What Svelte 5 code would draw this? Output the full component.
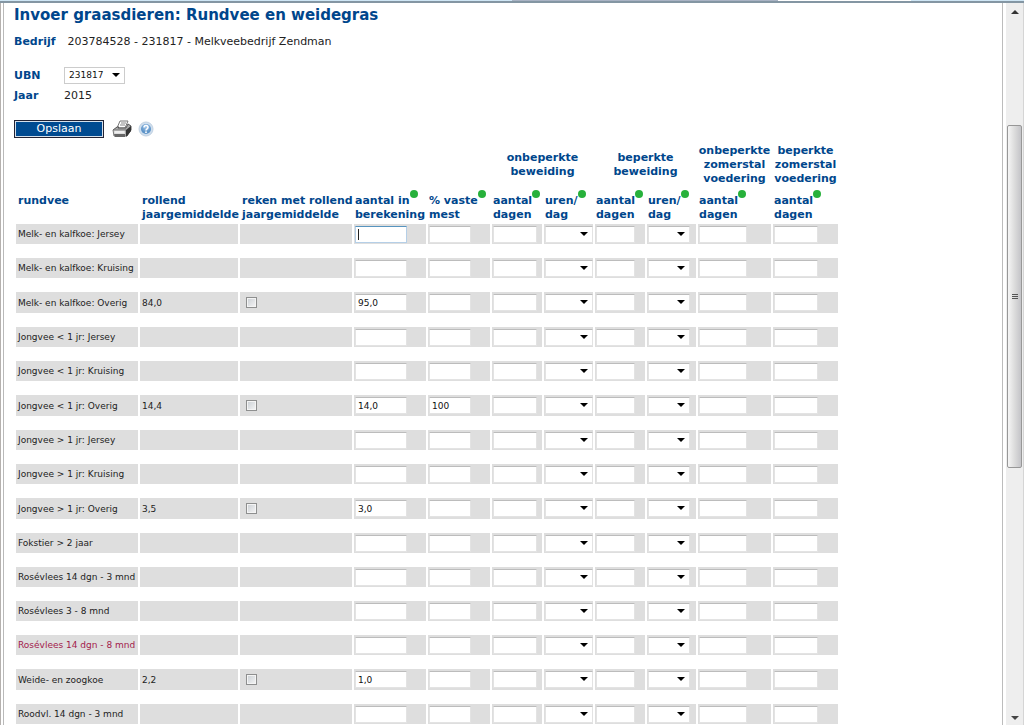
<script>
    let ubn = $state("231817");

    let rows = $state([
        { name: "Melk- en kalfkoe: Jersey" },
        { name: "Melk- en kalfkoe: Kruising" },
        { name: "Melk- en kalfkoe: Overig", average: "84,0", count: "95,0" },
        { name: "Jongvee < 1 jr: Jersey" },
        { name: "Jongvee < 1 jr: Kruising" },
        { name: "Jongvee < 1 jr: Overig", average: "14,4", count: "14,0", manure: "100" },
        { name: "Jongvee > 1 jr: Jersey" },
        { name: "Jongvee > 1 jr: Kruising" },
        { name: "Jongvee > 1 jr: Overig", average: "3,5", count: "3,0" },
        { name: "Fokstier > 2 jaar" },
        { name: "Rosévlees 14 dgn - 3 mnd" },
        { name: "Rosévlees 3 - 8 mnd" },
        { name: "Rosévlees 14 dgn - 8 mnd", warning: true },
        { name: "Weide- en zoogkoe", average: "2,2", count: "1,0" },
        { name: "Roodvl. 14 dgn - 3 mnd" },
    ]);

    const columns = [
        ["aantal in", "berekening"],
        ["% vaste", "mest"],
        ["aantal", "dagen"],
        ["uren/", "dag"],
        ["aantal", "dagen"],
        ["uren/", "dag"],
        ["aantal", "dagen"],
        ["aantal", "dagen"],
    ];
</script>

{#snippet hours(label, size)}
    <span class="select {size}">
        <select aria-label={label}>
            <option></option>
            <option>4</option>
            <option>8</option>
        </select>
    </span>
{/snippet}

<div class="window">
    <div class="tabs"><span class="tab"></span><span class="tab-active"></span></div>
    <div class="frame">
        <main>
            <h1>Invoer graasdieren: Rundvee en weidegras</h1>
            <p class="company"><b>Bedrijf</b> <span>203784528 - 231817 - Melkveebedrijf Zendman</span></p>

            <div class="field">
                <label for="ubn">UBN</label>
                <span class="select ubn">
                    <select id="ubn" bind:value={ubn}>
                        <option>231817</option>
                    </select>
                </span>
            </div>
            <div class="field">
                <b>Jaar</b>
                <span>2015</span>
            </div>

            <div class="actions">
                <button class="save">Opslaan</button>
                <button class="icon" aria-label="Afdrukken">
                    <svg width="20" height="18" viewBox="0 0 20 18">
                        <path d="M5 8 8 1h8l-3 7z" fill="#fff" stroke="#777" />
                        <path d="M9 3h5M8 5h5" stroke="#888" />
                        <path d="M1 10 5 7h2l-1 1h8l2-4 3 2v4l-4 6z" fill="#aaa" stroke="#555" />
                        <path d="M1 10h13v6H2z" fill="#ddd" stroke="#777" />
                        <path d="M14 10l5-4v5l-5 6z" fill="#333" />
                        <path d="M3 12h9" stroke="#fff" />
                        <path d="M2 14h11v3H3z" fill="#666" />
                    </svg>
                </button>
                <button class="icon" aria-label="Help">
                    <svg width="16" height="16" viewBox="0 0 16 16">
                        <defs>
                            <radialGradient id="ball" cy="30%">
                                <stop offset="0" stop-color="#a4c8ec" />
                                <stop offset="1" stop-color="#5e94c8" />
                            </radialGradient>
                        </defs>
                        <circle cx="8" cy="8" r="7" fill="#cfdeed" stroke="#c2d2e2" />
                        <circle cx="8" cy="8" r="5" fill="url(#ball)" />
                        <path d="M6 6.5c0-2.6 4-2.6 4 0 0 1.3-2 1.4-2 3" fill="none" stroke="#fff" stroke-width="1.5" />
                        <circle cx="8" cy="11.2" r="0.9" fill="#fff" />
                    </svg>
                </button>
            </div>

            <table>
                <colgroup>
                    <col class="c-name" />
                    <col class="c-average" />
                    <col class="c-use" />
                    <col class="c-count" />
                    <col class="c-manure" />
                    <col class="c-days" />
                    <col class="c-hours" />
                    <col class="c-days" />
                    <col class="c-hours" />
                    <col class="c-full" />
                    <col class="c-part" />
                </colgroup>
                <thead>
                    <tr class="groups">
                        <td colspan="5"></td>
                        <th colspan="2">onbeperkte<br />beweiding</th>
                        <th colspan="2">beperkte<br />beweiding</th>
                        <th>onbeperkte<br />zomerstal<br />voedering</th>
                        <th>beperkte<br />zomerstal<br />voedering</th>
                    </tr>
                    <tr class="heads">
                        <th>rundvee<br />&nbsp;</th>
                        <th>rollend<br />jaargemiddelde</th>
                        <th>reken met rollend<br />jaargemiddelde</th>
                        {#each columns as [first, second]}
                            <th class="entry"><span class="dot">{first}</span><br />{second}</th>
                        {/each}
                    </tr>
                </thead>
                <tbody>
                    {#each rows as row, i}
                        {#if i > 0}
                            <tr class="spacer"><td colspan="11"></td></tr>
                        {/if}
                        <tr class="animal" class:tall={row.average}>
                            <td class:warning={row.warning}>{row.name}</td>
                            <td>{row.average ?? ""}</td>
                            <td>
                                {#if row.average}
                                    <input type="checkbox" aria-label="Reken met rollend jaargemiddelde, {row.name}" />
                                {/if}
                            </td>
                            <td><input class="w-count" class:active={i === 0} aria-label="Aantal in berekening, {row.name}" bind:value={row.count} /></td>
                            <td><input class="w-manure" aria-label="% vaste mest, {row.name}" bind:value={row.manure} /></td>
                            <td><input class="w-days" aria-label="Onbeperkte beweiding dagen, {row.name}" /></td>
                            <td>{@render hours("Onbeperkte beweiding uren per dag, " + row.name, "wide")}</td>
                            <td><input class="w-short" aria-label="Beperkte beweiding dagen, {row.name}" /></td>
                            <td>{@render hours("Beperkte beweiding uren per dag, " + row.name, "narrow")}</td>
                            <td><input class="w-full" aria-label="Onbeperkte zomerstalvoedering dagen, {row.name}" /></td>
                            <td><input class="w-days" aria-label="Beperkte zomerstalvoedering dagen, {row.name}" /></td>
                        </tr>
                    {/each}
                </tbody>
            </table>
        </main>

        <div class="scrollbar">
            <span class="arrow up"></span>
            <div class="before"></div>
            <div class="thumb"><i></i><i></i><i></i></div>
            <div class="after"></div>
            <span class="arrow down"></span>
        </div>
    </div>
</div>

<style>
    :global(body) {
        margin: 0;
        background: #fff;
    }

    .window {
        height: 100vh;
        display: flex;
        flex-direction: column;
        overflow: hidden;
        font-family: Verdana, "DejaVu Sans", sans-serif;
        font-size: 11px;
        color: #222;
    }

    .window * {
        box-sizing: border-box;
    }

    .tabs {
        flex: none;
        display: flex;
        height: 3px;
        background: #cfe6f5;
        border-bottom: 2px solid #8496a3;
    }

    .tab {
        width: 26%;
        margin-left: 50%;
        background: #a9b3c4;
    }

    .tab-active {
        width: 13%;
        background: #fff;
    }

    .frame {
        flex: 1;
        min-height: 0;
        display: flex;
        border-left: 1px solid #b5b1ae;
        padding-left: 2px;
    }

    main {
        flex: 1;
        min-width: 0;
        overflow: hidden;
        padding: 2px 0 0 10px;
        border-left: 1px solid #b9b9b9;
        border-right: 1px solid #bcbcbc;
    }

    h1 {
        margin: 0;
        font-size: 15px;
        line-height: 20px;
        color: #00468c;
    }

    b,
    label,
    th {
        font-weight: bold;
        color: #00468c;
    }

    .company {
        display: flex;
        gap: 12px;
        margin: 10px 0 16px;
        line-height: 14px;
    }

    .field {
        display: flex;
        align-items: center;
        height: 20px;
    }

    .field b,
    .field label {
        width: 50px;
    }

    .actions {
        display: flex;
        align-items: center;
        height: 20px;
        margin: 14px 0 3px;
    }

    .save {
        width: 90px;
        height: 18px;
        margin-right: 8px;
        padding: 0;
        border: 1px solid #223;
        outline: 1px solid #d5e0ec;
        outline-offset: -2px;
        background: #004b91;
        color: #fff;
        font: inherit;
        line-height: 14px;
    }

    .icon {
        display: flex;
        margin-right: 6px;
        padding: 0;
        border: 0;
        background: none;
    }

    table {
        width: 826px;
        table-layout: fixed;
        border-spacing: 2px;
    }

    .c-name { width: 122px; }
    .c-average { width: 98px; }
    .c-use { width: 112px; }
    .c-count { width: 72px; }
    .c-manure { width: 62px; }
    .c-days { width: 50px; }
    .c-hours { width: 49px; }
    .c-full { width: 73px; }
    .c-part { width: 65px; }

    th,
    td {
        padding: 0;
        white-space: nowrap;
        line-height: 14px;
    }

    .groups th {
        height: 42px;
        text-align: center;
    }

    .heads th {
        height: 34px;
        padding-left: 2px;
        text-align: left;
        vertical-align: bottom;
    }

    .heads th.entry {
        padding-left: 1px;
    }

    .dot {
        position: relative;
    }

    .dot::after {
        content: "";
        position: absolute;
        left: 100%;
        top: -4px;
        width: 8px;
        height: 8px;
        border-radius: 50%;
        background: #27b13b;
    }

    .animal td {
        height: 20px;
        padding-left: 1px;
        background: #dedede;
        font-size: 9px;
        line-height: 16px;
        vertical-align: middle;
    }

    .animal td:nth-child(-n + 2) {
        padding-left: 2px;
    }

    .animal.tall td {
        height: 21px;
    }

    .animal td.warning {
        color: #a3204c;
    }

    .spacer td {
        height: 10px;
        line-height: 0;
    }

    input,
    select {
        appearance: none;
        display: block;
        height: 17px;
        margin: 0;
        padding: 0 2px;
        border: 1px solid #e3e3e3;
        border-top-color: #bcbcbc;
        border-radius: 0;
        background: #fff;
        color: #111;
        font-family: inherit;
        font-size: 9px;
    }

    .w-count { width: 52px; }
    .w-manure { width: 42px; }
    .w-days { width: 44px; }
    .w-short { width: 39px; }
    .w-full { width: 48px; }

    .active {
        border-color: #b5cfe7;
        border-top-color: #5794bf;
        background: linear-gradient(#222, #222) 2px 2px / 1px 11px no-repeat #fff;
    }

    input[type="checkbox"] {
        width: 11px;
        height: 11px;
        margin-left: 5px;
        padding: 0;
        border: 1px solid #8e8f8f;
        background: linear-gradient(135deg, #c9ced3, #f6f6f6);
        box-shadow: inset 0 0 0 1px #f4f4f4;
    }

    .select {
        position: relative;
        display: block;
    }

    .select select {
        width: 100%;
    }

    .select::after {
        content: "";
        position: absolute;
        right: 5px;
        top: 6px;
        border: 4px solid transparent;
        border-top-color: #000;
        border-bottom: 0;
        pointer-events: none;
    }

    .wide {
        width: 48px;
    }

    .narrow {
        width: 42px;
    }

    .ubn {
        width: 61px;
    }

    .ubn select {
        padding-left: 4px;
        border-color: #ccc;
    }

    .scrollbar {
        flex: none;
        width: 21px;
        display: flex;
        flex-direction: column;
        align-items: center;
        padding: 7px 0 5px;
        border-left: 3px solid #fff;
        border-right: 1px solid #d5d5d5;
        background: #eeeeee;
    }

    .arrow {
        border: 4px solid transparent;
    }

    .up {
        border-top: 0;
        border-bottom-color: #333;
    }

    .down {
        border-bottom: 0;
        border-top-color: #444;
    }

    .before {
        flex: 111;
    }

    .after {
        flex: 249;
    }

    .thumb {
        flex: 342;
        width: 15px;
        display: flex;
        flex-direction: column;
        align-items: center;
        justify-content: center;
        gap: 1px;
        border: 1px solid #979797;
        border-radius: 2px;
        background: linear-gradient(90deg, #f5f5f5, #dcdcdc 50%, #c4c4c8);
    }

    .thumb i {
        width: 6px;
        height: 1px;
        background: #555;
    }
</style>
